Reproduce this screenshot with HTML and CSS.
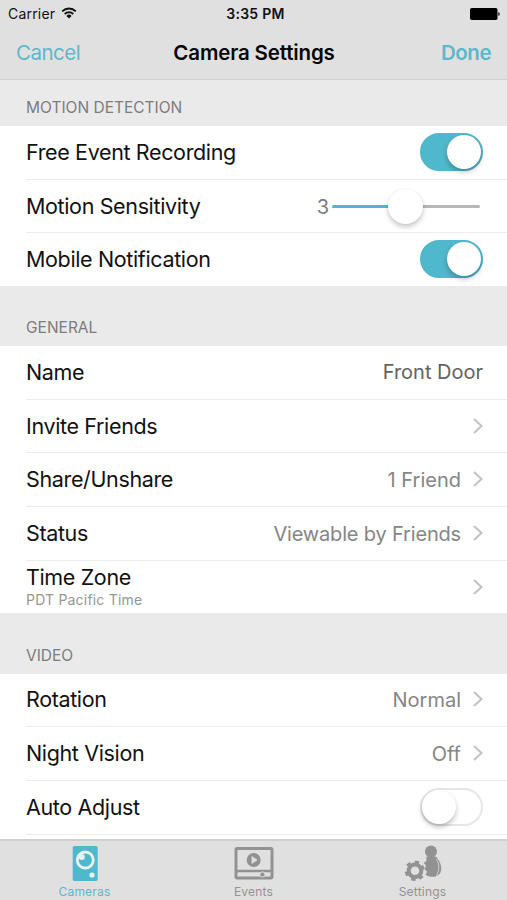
FILE: index.html
```html
<!DOCTYPE html>
<html lang="en">
<head>
<meta charset="utf-8">
<title>Camera Settings</title>
<link rel="stylesheet" href="styles.css">
</head>
<body>
<div class="screen">
  <header class="top">
    <div class="status">
      <span class="carrier">Carrier
        <svg class="wifi" width="16" height="12" viewBox="0 0 16 12"><g fill="none" stroke="#111" stroke-width="1.8"><path d="M1.2 4.3a9.7 9.7 0 0 1 13.6 0"/><path d="M3.7 7a6.2 6.2 0 0 1 8.6 0"/></g><path d="M8 11.4 5.4 8.9a3.7 3.7 0 0 1 5.2 0z" fill="#111"/></svg>
      </span>
      <span class="clock">3:35 PM</span>
      <svg class="battery" width="31" height="12" viewBox="0 0 31 12"><rect width="27.5" height="12" rx="1.8"/><path d="M28.4 4c1.6.3 1.6 3.7 0 4z"/></svg>
    </div>
    <div class="nav">
      <span class="cancel">Cancel</span>
      <h1 class="title">Camera Settings</h1>
      <span class="done">Done</span>
    </div>
  </header>

  <main class="content">
    <h2 class="heading first">MOTION DETECTION</h2>
    <section class="group motion">
      <div class="row"><span class="label">Free Event Recording</span><span class="switch on"></span></div>
      <div class="row even"><span class="label">Motion Sensitivity</span><span class="level">3</span><span class="slider"><span class="knob"></span></span></div>
      <div class="row"><span class="label">Mobile Notification</span><span class="switch on"></span></div>
    </section>

    <h2 class="heading">GENERAL</h2>
    <section class="group general">
      <div class="row"><span class="label">Name</span><span class="value dark">Front Door</span></div>
      <div class="row even"><span class="label">Invite Friends</span><svg class="chev" width="10" height="16" viewBox="0 0 10 16"><path d="m1 1 7.5 7L1 15"/></svg></div>
      <div class="row"><span class="label">Share/Unshare</span><span class="value low">1 Friend</span><svg class="chev" width="10" height="16" viewBox="0 0 10 16"><path d="m1 1 7.5 7L1 15"/></svg></div>
      <div class="row"><span class="label">Status</span><span class="value low long">Viewable by Friends</span><svg class="chev" width="10" height="16" viewBox="0 0 10 16"><path d="m1 1 7.5 7L1 15"/></svg></div>
      <div class="row even"><span class="stack"><span class="label">Time Zone</span><span class="sub">PDT Pacific Time</span></span><svg class="chev" width="10" height="16" viewBox="0 0 10 16"><path d="m1 1 7.5 7L1 15"/></svg></div>
    </section>

    <h2 class="heading video-heading">VIDEO</h2>
    <section class="group video">
      <div class="row"><span class="label">Rotation</span><span class="value low">Normal</span><svg class="chev" width="10" height="16" viewBox="0 0 10 16"><path d="m1 1 7.5 7L1 15"/></svg></div>
      <div class="row"><span class="label">Night Vision</span><span class="value low">Off</span><svg class="chev" width="10" height="16" viewBox="0 0 10 16"><path d="m1 1 7.5 7L1 15"/></svg></div>
      <div class="row"><span class="label">Auto Adjust</span><span class="switch"></span></div>
      <div class="row"></div>
    </section>
  </main>

  <footer class="tabs">
    <div class="tab active">
      <svg width="40" height="37" viewBox="0 0 40 37"><rect x="7.7" y="1" width="25" height="35" rx="1.8" fill="#50b8cc"/><circle cx="20.3" cy="15" r="8" fill="none" stroke="#e8f1f3" stroke-width="2.8"/><circle cx="16.8" cy="12" r="3" fill="#e8f1f3"/><circle cx="27" cy="30" r="2.6" fill="#e8f1f3"/></svg>
      <span>Cameras</span>
    </div>
    <div class="tab">
      <svg width="40" height="37" viewBox="0 0 40 37"><rect x="2" y="3.5" width="36" height="29.5" rx="1.2" fill="none" stroke="#929292" stroke-width="3"/><path d="M3 26h35" stroke="#929292" stroke-width="2.6"/><circle cx="19.7" cy="15" r="7" fill="#929292"/><path d="m17.6 11 6 4-6 4z" fill="#e0e0e0"/><circle cx="28.4" cy="29.5" r="2.6" fill="#929292" stroke="#e0e0e0" stroke-width="1"/></svg>
      <span>Events</span>
    </div>
    <div class="tab">
      <svg width="40" height="37" viewBox="0 0 40 37" fill="#929292"><circle cx="28" cy="6.6" r="6"/><path d="M23.5 11.5h9.2c3.5 3.2 5.8 8.2 5.5 12.9-.2 4.2-3.8 7.4-8.5 7.4-3.1 0-5.7-.7-7.2-2.3l1.6-2.7-2.2-2.3 1-4.3-2.3-2.3 2.8-1.8z"/><path d="M33.5 14c3 5 3 11 0 17" fill="none" stroke="#e0e0e0" stroke-width="0.8"/><circle cx="12" cy="25.8" r="6.3" fill="none" stroke="#929292" stroke-width="4"/><g stroke="#929292" stroke-width="4.4"><path d="m13.6 18.4.5-2.5"/><path d="m18.8 23 2.2-1"/><path d="m17.1 31.4 1.8 2"/><path d="m10.6 33.2-.6 2.6"/><path d="m4.8 28.4-2.4.9"/><path d="m6.6 20.4-1.7-2"/></g></svg>
      <span>Settings</span>
    </div>
  </footer>
</div>
</body>
</html>
```
FILE: styles.css
```css
* { box-sizing: border-box; }
body { margin: 0; font-family: Inter, "Liberation Sans", sans-serif; color: #111; }
h1, h2 { margin: 0; }
.screen { width: 507px; height: 900px; overflow: hidden; display: flex; flex-direction: column; background: #eaeaea; }

.top { height: 80px; flex: none; background: #e0e0e0; border-bottom: 1px solid #cecece; }
.status { height: 27px; padding: 0 6px 0 8px; display: grid; grid-template-columns: 1fr auto 1fr; align-items: center; font-size: 14px; }
.carrier { display: flex; align-items: center; gap: 6px; letter-spacing: 0.2px; }
.wifi { margin-top: -2px; }
.clock { font-weight: 600; letter-spacing: 0.3px; padding-left: 2px; }
.battery { justify-self: end; }
.nav { height: 50px; padding: 0 16px; display: grid; grid-template-columns: 1fr auto 1fr; align-items: center; font-size: 20.5px; }
.cancel { color: #5bb9cb; letter-spacing: -0.5px; }
.title { font-size: 20.5px; font-weight: 600; letter-spacing: -0.15px; color: #060606; padding-left: 1px; }
.done { color: #5bb9cb; font-weight: 600; letter-spacing: -0.5px; justify-self: end; }

.content { flex: 1; min-height: 0; overflow: hidden; }
.heading { height: 60px; padding: 32px 26px 0; font-size: 15.5px; line-height: 20px; font-weight: 400; color: #7c7c7c; }
.first { height: 46px; padding-top: 18px; }
.video-heading { height: 61px; padding-top: 33px; }
.group { background: #fff; padding-left: 26px; display: grid; }
.motion { height: 160px; grid-template-rows: 54px 53px 53px; }
.general { height: 267px; grid-template-rows: 54px 53px 54px 54px 52px; }
.video { grid-template-rows: 53px 54px 54px 40px; }
.row { padding: 0 24px 2px 0; display: flex; align-items: center; border-bottom: 1px solid #ececec; }
.row.even { padding-bottom: 0; }
.row:last-child { border-bottom: 0; }
.label { font-size: 21.5px; line-height: 26px; letter-spacing: -0.36px; flex: 1; white-space: nowrap; }
.value { font-size: 20px; line-height: 26px; color: #858585; white-space: nowrap; }
.low { padding-top: 2px; }
.long { letter-spacing: -0.17px; }
.dark { color: #626262; }
.chev { margin-left: 12px; fill: none; stroke: #c3c3c3; stroke-width: 2; }
.stack { flex: 1; display: flex; flex-direction: column; }
.stack .label { line-height: 25px; }
.sub { font-size: 14px; line-height: 19px; letter-spacing: 0.2px; color: #969696; }

.switch { width: 63px; height: 38px; border-radius: 19px; border: 2px solid #e6e6e6; background: #fff; display: flex; align-items: center; }
.switch::before { content: ""; width: 34px; height: 34px; border-radius: 50%; background: #fff; box-shadow: 0 3px 5px rgba(0,0,0,.25); }
.on { border-color: #50b8cc; background: #50b8cc; justify-content: flex-end; }
.level { font-size: 20px; color: #7c7c7c; margin-right: 3px; padding-top: 2px; }
.slider { width: 148px; height: 3px; margin-right: 3px; border-radius: 2px; background: linear-gradient(to right, #50b8cc 50%, #b7b7b7 50%); display: flex; align-items: center; justify-content: center; }
.knob { flex: none; width: 35px; height: 35px; margin-right: 1px; border-radius: 50%; background: #fff; box-shadow: 0 3px 5px rgba(0,0,0,.22), 0 0 2px rgba(0,0,0,.06); }

.tabs { height: 61px; flex: none; padding-top: 4px; border-top: 2px solid #cfcfcf; background: #e0e0e0; display: grid; grid-template-columns: 169px 169px 169px; }
.tab { display: flex; flex-direction: column; align-items: center; font-size: 12px; line-height: 19px; color: #929292; letter-spacing: 0.2px; }
.tab svg { flex: none; }
.active { color: #5bb9cb; }
```
